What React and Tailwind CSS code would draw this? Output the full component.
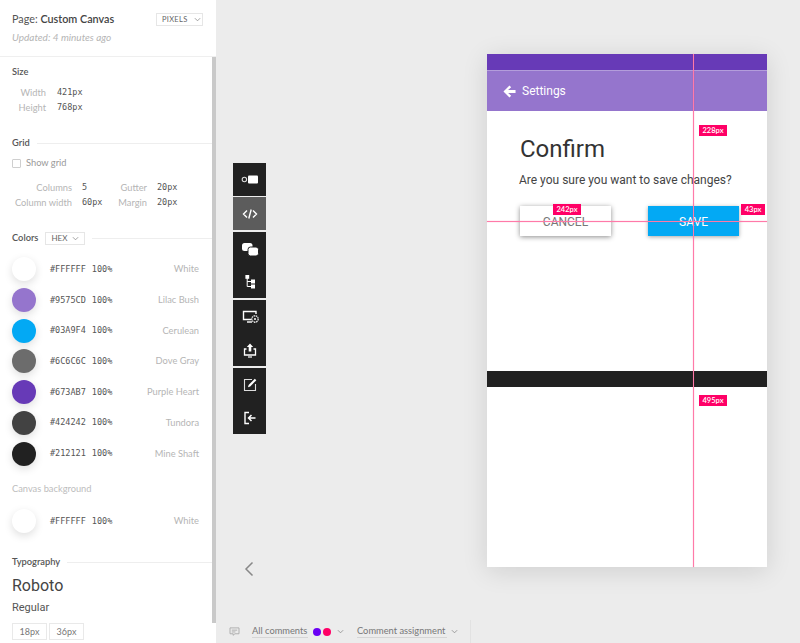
const ui = { fontFamily: 'Lato, "Open Sans", sans-serif' };

const swatches = [
  { hex: '#FFFFFF', name: 'White', cls: 'bg-white' },
  { hex: '#9575CD', name: 'Lilac Bush', cls: 'bg-[#9575cd]' },
  { hex: '#03A9F4', name: 'Cerulean', cls: 'bg-[#03a9f4]' },
  { hex: '#6C6C6C', name: 'Dove Gray', cls: 'bg-[#6c6c6c]' },
  { hex: '#673AB7', name: 'Purple Heart', cls: 'bg-[#673ab7]' },
  { hex: '#424242', name: 'Tundora', cls: 'bg-[#424242]' },
  { hex: '#212121', name: 'Mine Shaft', cls: 'bg-[#212121]' },
];

const Chevron = ({ className = '' }) => (
  <svg viewBox="0 0 8 5" className={`w-[7px] h-[5px] ${className}`} fill="none" stroke="#8a8a8a" strokeWidth="0.9">
    <path d="M1 1l3 3 3-3" />
  </svg>
);

const Mono = ({ children, className = '' }) => (
  <span className={`font-['DejaVu_Sans_Mono',monospace] text-[8.5px] text-[#555] ${className}`}>{children}</span>
);

const SwatchRow = ({ s, className = '' }) => (
  <div className={`flex items-center h-[24px] ${className}`}>
    <div className={`w-[24px] h-[24px] rounded-full ${s.cls} shadow-[0_3px_9px_rgba(0,0,0,0.13)]`} />
    <Mono className="ml-[14px]">{s.hex}</Mono>
    <Mono className="ml-[6px]">100%</Mono>
    <span className="ml-auto text-[9.3px] text-[#b5b5b5]">{s.name}</span>
  </div>
);

const Heading = ({ children, line = true, extra = null }) => (
  <div className="flex items-center h-[14px]">
    <span className="text-[9.3px] font-semibold text-[#555]">{children}</span>
    {extra}
    {line && <div className="flex-1 h-px bg-[#eeeeee] ml-[7px]" />}
  </div>
);

const Sidebar = () => (
  <aside className="relative w-[216px] h-full bg-white shrink-0 overflow-hidden" style={ui}>
    <div className="h-[57px] border-b border-[#efefef] pl-[12px] pr-[13px] pt-[12px]">
      <div className="flex items-center justify-between h-[15px]">
        <div className="text-[10.8px] text-[#555]">
          Page: <span className="font-semibold text-[#444]">Custom Canvas</span>
        </div>
        <div className="flex items-center gap-[6px] h-[13px] w-[47px] pl-[5px] border border-[#e6e6e6] text-[7.5px] tracking-[0.3px] text-[#666]">
          PIXELS <Chevron />
        </div>
      </div>
      <div className="mt-[3px] text-[10px] italic text-[#b5b5b5]">Updated: 4 minutes ago</div>
    </div>

    <div className="pl-[12px] pr-[4px]">
      <div className="mt-[8px]">
        <Heading line={false}>Size</Heading>
      </div>
      <div className="mt-[6px] grid grid-cols-[34px_1fr] gap-x-[11px] leading-[15px]">
        <span className="text-right text-[9.3px] text-[#b5b5b5]">Width</span>
        <Mono>421px</Mono>
        <span className="text-right text-[9.3px] text-[#b5b5b5]">Height</span>
        <Mono>768px</Mono>
      </div>

      <div className="mt-[21px]">
        <Heading>Grid</Heading>
      </div>
      <div className="mt-[6px] flex items-center h-[14px]">
        <div className="w-[9px] h-[9px] border border-[#cfcfcf] rounded-[1px]" />
        <span className="ml-[5px] text-[9.3px] text-[#999]">Show grid</span>
      </div>
      <div className="mt-[10px] grid grid-cols-[60px_25px_30px_1fr] gap-x-[10px] leading-[15px]">
        <span className="text-right text-[9.3px] text-[#b5b5b5]">Columns</span>
        <Mono>5</Mono>
        <span className="text-right text-[9.3px] text-[#b5b5b5]">Gutter</span>
        <Mono>20px</Mono>
        <span className="text-right text-[9.3px] text-[#b5b5b5] whitespace-nowrap">Column width</span>
        <Mono>60px</Mono>
        <span className="text-right text-[9.3px] text-[#b5b5b5]">Margin</span>
        <Mono>20px</Mono>
      </div>

      <div className="mt-[21px]">
        <Heading
          extra={
            <div className="ml-[7px] flex items-center gap-[5px] h-[13px] px-[5px] border border-[#e6e6e6] text-[8px] font-normal text-[#666]">
              HEX <Chevron />
            </div>
          }
        >
          Colors
        </Heading>
      </div>
      <div className="mt-[12.4px] pr-[13px] flex flex-col gap-[6.7px]">
        {swatches.map((s) => (
          <SwatchRow key={s.hex} s={s} />
        ))}
      </div>

      <div className="mt-[16.6px] text-[9.3px] leading-[14px] text-[#bdbdbd]">Canvas background</div>
      <div className="mt-[13px] pr-[13px]">
        <SwatchRow s={swatches[0]} />
      </div>

      <div className="mt-[22px]">
        <Heading>Typography</Heading>
      </div>
      <div className="mt-[7px] font-['Roboto',sans-serif] text-[16px] leading-[20px] text-[#444]">Roboto</div>
      <div className="mt-[5px] font-['Roboto',sans-serif] text-[11px] leading-[14px] text-[#555]">Regular</div>
      <div className="mt-[8px] flex gap-[2px]">
        <div className="flex items-center justify-center w-[35px] h-[17px] border border-[#e9e9e9] text-[9px] text-[#777]">18px</div>
        <div className="flex items-center justify-center w-[35px] h-[17px] border border-[#e9e9e9] text-[9px] text-[#777]">36px</div>
      </div>
    </div>

    {/* scrollbar thumb */}
    <div className="absolute right-0 top-[57px] w-[4px] h-[566px] bg-[#c9c9c9]" />
  </aside>
);

const icons = {
  device: (
    <>
      <rect x="7" y="4.5" width="10" height="8" rx="1" fill="#fff" />
      <circle cx="3.4" cy="8.5" r="2.2" fill="none" stroke="#ddd" strokeWidth="1.1" />
    </>
  ),
  code: (
    <path d="M6 5.5L2.5 9 6 12.5M12 5.5L15.5 9 12 12.5M10.2 4.5L7.8 13.5" fill="none" stroke="#fff" strokeWidth="1.4" />
  ),
  chat: (
    <>
      <rect x="1" y="3" width="10.5" height="8" rx="2.5" fill="#fff" />
      <rect x="7" y="7" width="10.5" height="9" rx="2.5" fill="#fff" stroke="#212121" strokeWidth="1" />
    </>
  ),
  tree: (
    <>
      <path d="M6.2 4v9.5h5M6.2 8.5h5" fill="none" stroke="#fff" strokeWidth="1" />
      <rect x="4.4" y="2" width="3.8" height="3.8" fill="#fff" />
      <rect x="10" y="6.5" width="4" height="4" fill="#fff" />
      <rect x="10" y="11.5" width="4" height="4" fill="#fff" />
    </>
  ),
  monitor: (
    <>
      <path d="M10.5 11.5H2.5v-8h12.5v2.5" fill="none" stroke="#fff" strokeWidth="1.4" />
      <path d="M6 14h5" fill="none" stroke="#fff" strokeWidth="1.4" />
      <circle cx="14" cy="11" r="3.2" fill="none" stroke="#ddd" strokeWidth="1.4" strokeDasharray="1.6 0.6" />
      <circle cx="14" cy="11" r="1" fill="#fff" />
    </>
  ),
  upload: (
    <>
      <path d="M5.5 8H3.5v6h11V8h-2" fill="none" stroke="#fff" strokeWidth="1.3" />
      <path d="M9 2.5L5.8 6H7.7v4.5h2.6V6h1.9z" fill="#fff" />
      <path d="M7 16h4" stroke="#fff" strokeWidth="1.2" />
    </>
  ),
  edit: (
    <>
      <path d="M11 3.5H3.5v11h11V8" fill="none" stroke="#ddd" strokeWidth="1.1" />
      <path d="M7 11.2L7.6 9 13.8 2.8 15.3 4.3 9.2 10.6z" fill="#fff" />
    </>
  ),
  exit: (
    <>
      <path d="M8 3.5H4v11h4" fill="none" stroke="#fff" strokeWidth="1.4" />
      <path d="M7.5 9h7M10.5 6L7.5 9l3 3" fill="none" stroke="#fff" strokeWidth="1.5" />
    </>
  ),
};

const ToolIcon = ({ name, active = false }) => (
  <div className={`flex items-center justify-center w-[33px] h-[33px] ${active ? 'bg-[#5c5c5c]' : ''}`}>
    <svg viewBox="0 0 18 18" className="w-[18px] h-[18px]">
      {icons[name]}
    </svg>
  </div>
);

const Toolbar = () => (
  <div className="flex flex-col ml-[17px] mt-[163px] w-[33px] shrink-0">
    <div className="bg-[#212121]"><ToolIcon name="device" /></div>
    <div className="mt-px"><ToolIcon name="code" active /></div>
    <div className="mt-[2px] bg-[#212121]">
      <ToolIcon name="chat" />
      <ToolIcon name="tree" />
    </div>
    <div className="mt-[2px] bg-[#212121]">
      <ToolIcon name="monitor" />
      <ToolIcon name="upload" />
    </div>
    <div className="mt-[2px] bg-[#212121]">
      <ToolIcon name="edit" />
      <ToolIcon name="exit" />
    </div>
    <svg viewBox="0 0 12 16" className="mt-[127px] ml-[10px] w-[12px] h-[16px]" fill="none" stroke="#888" strokeWidth="1.5">
      <path d="M9.5 1.5L3 8l6.5 6.5" />
    </svg>
  </div>
);

const Badge = ({ className, children }) => (
  <div className={`absolute flex items-center justify-center h-[11px] bg-[#ff0066] text-white text-[7.5px] font-semibold ${className}`} style={ui}>
    {children}
  </div>
);

const Artboard = () => (
  <div className="relative ml-[221px] mt-[54px] w-[280px] h-[513px] bg-white shrink-0 shadow-[0_4px_24px_rgba(0,0,0,0.12)] font-['Roboto',sans-serif]">
    <div className="h-[16px] bg-[#673ab7]" />
    <div className="h-[41px] bg-[#9575cd] border-t border-[#b39ddb] flex items-center pl-[16px]">
      <svg viewBox="0 0 14 14" className="w-[13px] h-[13px]" fill="#fff">
        <path d="M7 0.5L0.5 7 7 13.5 8.8 11.7 5.5 8.5H13.5V5.5H5.5L8.8 2.3z" />
      </svg>
      <span className="ml-[6px] text-[12px] text-white">Settings</span>
    </div>

    <div className="pl-[33px] pr-[28px] pt-[22px]">
      <div className="text-[24px] leading-[32px] text-[#333]">Confirm</div>
      <div className="mt-[7px] -ml-px text-[12px] leading-[16px] text-[#444] whitespace-nowrap">Are you sure you want to save changes?</div>
      <div className="mt-[18px] flex justify-between">
        <div className="flex items-center justify-center w-[91px] h-[30px] pt-px bg-white text-[12px] text-[#777] shadow-[0_1px_5px_rgba(0,0,0,0.45)]">CANCEL</div>
        <div className="flex items-center justify-center w-[91px] h-[30px] pt-px bg-[#03a9f4] text-[12px] text-white shadow-[0_1px_4px_rgba(0,0,0,0.35)]">SAVE</div>
      </div>
    </div>

    <div className="mt-[135px] h-[16px] bg-[#212121]" />

    {/* measurement guides */}
    <div className="absolute left-[206px] top-0 w-px h-full bg-[#ff7aa8] shadow-[0_0_1px_rgba(255,0,102,0.5)]" />
    <div className="absolute left-0 top-[167px] w-full h-px bg-[#ff7aa8] shadow-[0_0_1px_rgba(255,0,102,0.5)]" />
    <Badge className="left-[212px] top-[71px] w-[28px]">228px</Badge>
    <Badge className="left-[66px] top-[150px] w-[28px]">242px</Badge>
    <Badge className="left-[254px] top-[150px] w-[24px]">43px</Badge>
    <Badge className="left-[212px] top-[341px] w-[28px]">495px</Badge>
  </div>
);

const BottomBar = () => (
  <div className="flex items-center h-[23px] pl-[13px] text-[9.3px] text-[#777]" style={ui}>
    <svg viewBox="0 0 12 10" className="w-[11px] h-[9px]" fill="none" stroke="#aaa" strokeWidth="1">
      <path d="M1 1h10v6.5H6.5L4.5 9.2V7.5H1zM3 3.5h6M3 5.5h4" />
    </svg>
    <span className="ml-[12px] w-[56px] whitespace-nowrap border-b border-[#d6d6d6] leading-[12px]">All comments</span>
    <div className="ml-[5px] w-[8px] h-[8px] rounded-full bg-[#6a00f4]" />
    <div className="ml-[2px] w-[8px] h-[8px] rounded-full bg-[#ff0066]" />
    <Chevron className="ml-[6px]" />
    <span className="ml-[13px] w-[90px] whitespace-nowrap border-b border-[#d6d6d6] leading-[12px]">Comment assignment</span>
    <Chevron className="ml-[4px]" />
    <div className="ml-[12px] w-px h-full bg-[#e2e2e2]" />
  </div>
);

const App = () => (
  <div className="flex w-[800px] h-[643px] bg-[#ececec] overflow-hidden">
    <Sidebar />
    <main className="flex-1 flex flex-col min-w-0">
      <div className="flex-1 flex min-h-0">
        <Toolbar />
        <Artboard />
      </div>
      <BottomBar />
    </main>
  </div>
);

export default App;
